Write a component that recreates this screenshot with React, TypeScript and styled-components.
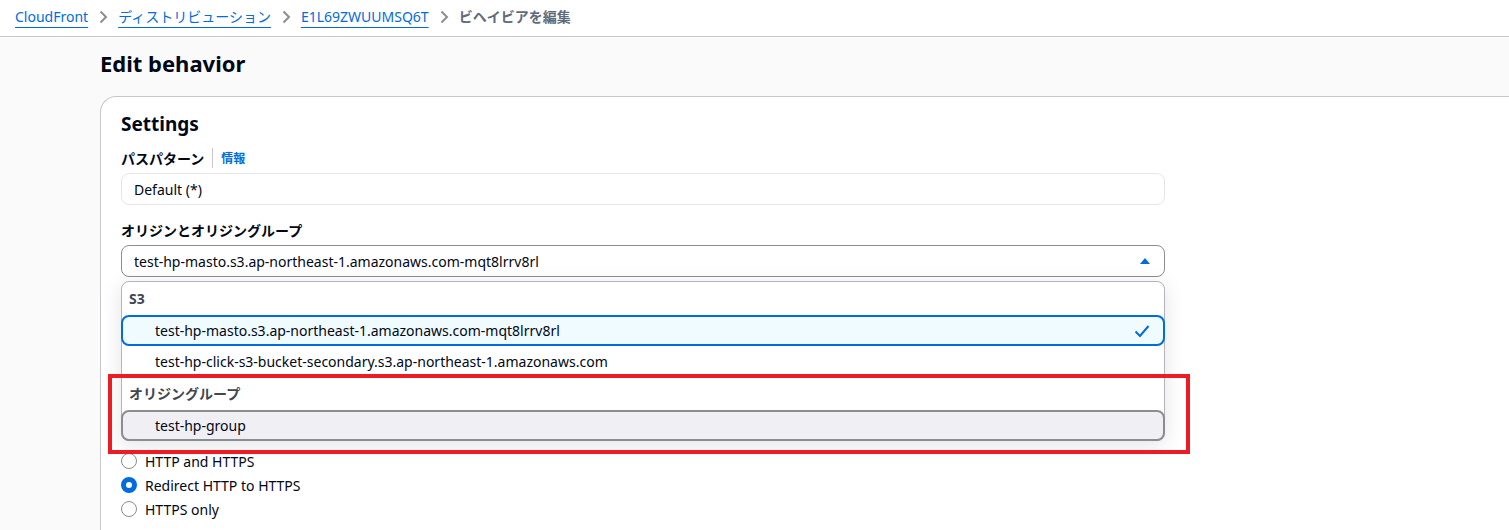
import React from "react";
import styled, { createGlobalStyle } from "styled-components";

const Global = createGlobalStyle`
  html, body { margin: 0; padding: 0; overflow: hidden; }
  body {
    background: #fafafa;
    font-family: "Noto Sans", "Noto Sans CJK JP", sans-serif;
    font-size: 14px;
    color: #000716;
  }
  * { box-sizing: border-box; }
`;

const Page = styled.div`
  width: 1509px;
  height: 530px;
  display: flex;
  flex-direction: column;
`;

const Breadcrumbs = styled.nav`
  height: 37px;
  flex: none;
  background: #fff;
  border-bottom: 1px solid #c6c6cd;
  display: flex;
  align-items: center;
  gap: 7px;
  padding: 0 0 3px 15px;
`;

const Crumb = styled.a`
  color: #006ce0;
  font-size: 14px;
  text-decoration: underline;
  text-underline-offset: 5px;
  line-height: 20px;
`;

const Current = styled.span`
  color: #5f6b7a;
  font-weight: 700;
  font-size: 14px;
  line-height: 20px;
`;

const Sep = styled.svg`
  width: 16px;
  height: 16px;
  flex: none;
`;

const Main = styled.main`
  flex: 1;
  padding-left: 100px;
  display: flex;
  flex-direction: column;
`;

const Title = styled.h1`
  margin: 12px 0 0;
  font-size: 22px;
  line-height: 28px;
  font-weight: 700;
  color: #000716;
`;

const Card = styled.section`
  margin-top: 19px;
  width: 1460px;
  flex: 1;
  background: #fff;
  border: 1px solid #c6c6cd;
  border-right: none;
  border-bottom: none;
  border-top-left-radius: 16px;
  padding: 14px 0 0 20px;
`;

const CardTitle = styled.h2`
  margin: 0;
  font-size: 19px;
  line-height: 26px;
  font-weight: 700;
`;

const Field = styled.div<{ $top: number }>`
  margin-top: ${(p) => p.$top}px;
  width: 1044px;
  display: flex;
  flex-direction: column;
  gap: 4px;
`;

const LabelRow = styled.div`
  display: flex;
  align-items: center;
  height: 22px;
`;

const Label = styled.span`
  font-weight: 700;
  font-size: 14px;
`;

const Divider = styled.span`
  width: 1px;
  height: 20px;
  background: #c6c6cd;
  margin: 0 8px;
`;

const Info = styled.a`
  color: #006ce0;
  font-weight: 700;
  font-size: 12px;
`;

const Input = styled.div`
  height: 32px;
  border: 1px solid #e6e6ea;
  border-radius: 8px;
  padding: 0 12px;
  display: flex;
  align-items: center;
  background: #fff;
`;

const SelectWrap = styled.div`
  position: relative;
`;

const SelectBox = styled.div`
  height: 32px;
  border: 1px solid #8c8c94;
  border-radius: 8px;
  padding: 0 14px 0 12px;
  display: flex;
  align-items: center;
  justify-content: space-between;
  background: #fff;
`;

const Caret = styled.svg`
  width: 10px;
  height: 6px;
`;

const Dropdown = styled.div`
  position: absolute;
  top: calc(100% + 4px);
  left: 0;
  right: 0;
  z-index: 2;
  background: #fff;
  border: 1px solid #b4b4bb;
  border-radius: 8px;
  box-shadow: 0 4px 20px 1px rgba(0, 7, 22, 0.1);
  display: flex;
  flex-direction: column;
`;

const GroupHeader = styled.div`
  height: 33px;
  padding: 6px 0 0 7px;
  font-weight: 700;
  color: #424650;
  line-height: 22px;
`;

const Option = styled.div<{ $state?: "selected" | "hover" }>`
  height: 31px;
  margin: 0 -1px;
  padding: 0 13px 0 32px;
  display: flex;
  align-items: center;
  justify-content: space-between;
  border-radius: 8px;
  border: 2px solid
    ${(p) =>
      p.$state === "selected" ? "#006ce0" : p.$state === "hover" ? "#8c8c94" : "transparent"};
  background: ${(p) =>
    p.$state === "selected" ? "#f0fbff" : p.$state === "hover" ? "#f0f0f4" : "transparent"};
  margin-bottom: ${(p) => (p.$state === "hover" ? "-1px" : "0")};
`;

const Check = styled.svg`
  width: 16px;
  height: 16px;
`;

const Annotation = styled.div`
  position: absolute;
  z-index: 3;
  top: 129px;
  left: -13px;
  width: 1082px;
  height: 80px;
  border: 4px solid #ec1c24;
  pointer-events: none;
`;

const RadioGroup = styled.div`
  margin-top: 172px;
  display: flex;
  flex-direction: column;
`;

const RadioRow = styled.label`
  height: 24px;
  display: flex;
  align-items: center;
  gap: 8px;
`;

const RadioDot = styled.span<{ $checked?: boolean }>`
  width: 16px;
  height: 16px;
  border-radius: 50%;
  border: ${(p) => (p.$checked ? "5px solid #006ce0" : "1.5px solid #8c8c94")};
  background: #fff;
  flex: none;
`;

const Chevron = () => (
  <Sep viewBox="0 0 16 16">
    <path d="M5.5 2.5 11 8l-5.5 5.5" fill="none" stroke="#8c8c94" strokeWidth="2" />
  </Sep>
);

export default function App() {
  return (
    <Page>
      <Global />
      <Breadcrumbs>
        <Crumb>CloudFront</Crumb>
        <Chevron />
        <Crumb>ディストリビューション</Crumb>
        <Chevron />
        <Crumb>E1L69ZWUUMSQ6T</Crumb>
        <Chevron />
        <Current>ビヘイビアを編集</Current>
      </Breadcrumbs>
      <Main>
        <Title>Edit behavior</Title>
        <Card>
          <CardTitle>Settings</CardTitle>
          <Field $top={10}>
            <LabelRow>
              <Label>パスパターン</Label>
              <Divider />
              <Info>情報</Info>
            </LabelRow>
            <Input>Default (*)</Input>
          </Field>
          <Field $top={14}>
            <LabelRow>
              <Label>オリジンとオリジングループ</Label>
            </LabelRow>
            <SelectWrap>
              <SelectBox>
                <span>test-hp-masto.s3.ap-northeast-1.amazonaws.com-mqt8lrrv8rl</span>
                <Caret viewBox="0 0 10 6">
                  <path d="M0 6 5 0l5 6z" fill="#006ce0" />
                </Caret>
              </SelectBox>
              <Dropdown>
                <GroupHeader>S3</GroupHeader>
                <Option $state="selected">
                  <span>test-hp-masto.s3.ap-northeast-1.amazonaws.com-mqt8lrrv8rl</span>
                  <Check viewBox="0 0 16 16">
                    <path d="M1.5 8.5 6 13l8.5-10" fill="none" stroke="#006ce0" strokeWidth="2" />
                  </Check>
                </Option>
                <Option>
                  <span>test-hp-click-s3-bucket-secondary.s3.ap-northeast-1.amazonaws.com</span>
                </Option>
                <GroupHeader>オリジングループ</GroupHeader>
                <Option $state="hover">
                  <span>test-hp-group</span>
                </Option>
              </Dropdown>
              <Annotation />
            </SelectWrap>
          </Field>
          <RadioGroup>
            <RadioRow>
              <RadioDot />
              HTTP and HTTPS
            </RadioRow>
            <RadioRow>
              <RadioDot $checked />
              Redirect HTTP to HTTPS
            </RadioRow>
            <RadioRow>
              <RadioDot />
              HTTPS only
            </RadioRow>
          </RadioGroup>
        </Card>
      </Main>
    </Page>
  );
}
